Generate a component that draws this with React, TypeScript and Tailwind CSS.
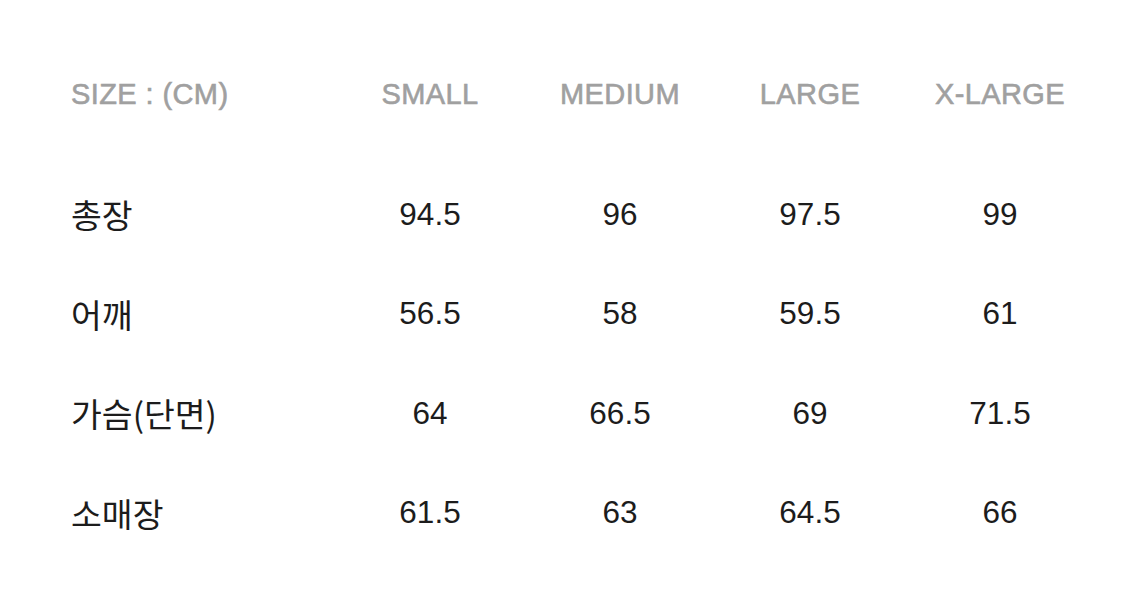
import React from 'react'

const sizes = ['SMALL', 'MEDIUM', 'LARGE', 'X-LARGE']

const rows = [
  { label: '총장', values: ['94.5', '96', '97.5', '99'] },
  { label: '어깨', values: ['56.5', '58', '59.5', '61'] },
  { label: '가슴(단면)', values: ['64', '66.5', '69', '71.5'] },
  { label: '소매장', values: ['61.5', '63', '64.5', '66'] }
]

export default function App() {
  return (
    <div className="w-[1125px] h-[613px] bg-white font-['Liberation_Sans','Noto_Sans_CJK_KR',sans-serif]">
      <div className="pl-[71px] pt-[73px]">
        {/* Header */}
        <div className="grid grid-cols-[264px_repeat(4,190px)] h-[40px] items-center text-[29px] tracking-[0.4px] text-[#a0a0a0] [-webkit-text-stroke:0.6px_#a0a0a0]">
          <div>SIZE : (CM)</div>
          {sizes.map(s => (
            <div key={s} className="text-center">{s}</div>
          ))}
        </div>

        <div className="mt-[76px]">
          {rows.map(row => (
            <div
              key={row.label}
              className="grid grid-cols-[264px_repeat(4,190px)] h-[40px] mb-[59.5px] items-center text-[31.5px] text-[#1c1c1c]"
            >
              <div className="font-['Noto_Sans_CJK_KR',sans-serif] text-[33.5px]">{row.label}</div>
              {row.values.map((v, i) => (
                <div key={i} className="text-center">{v}</div>
              ))}
            </div>
          ))}
        </div>
      </div>
    </div>
  )
}
